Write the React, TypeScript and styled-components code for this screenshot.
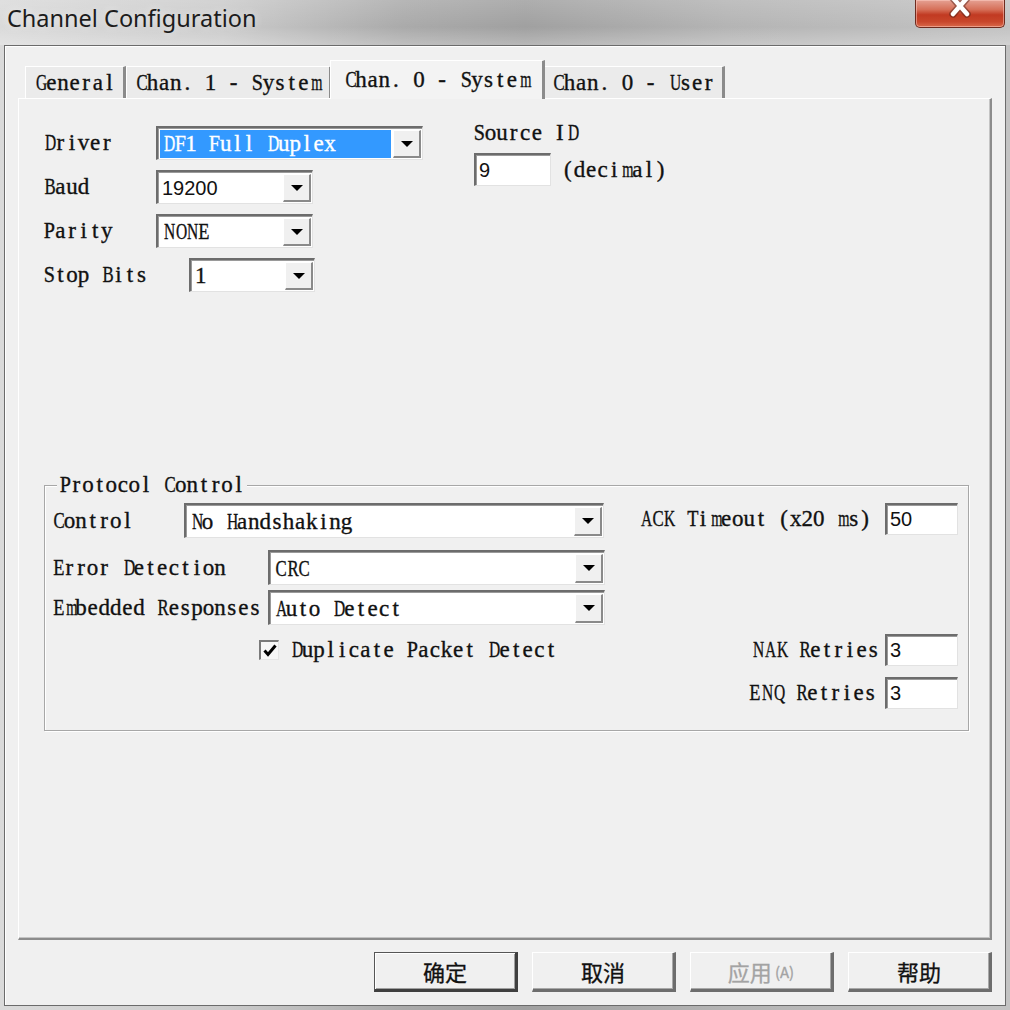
import * as React from "react"
import styled, { createGlobalStyle } from "styled-components"

const GlobalStyle = createGlobalStyle`
  html, body {
    margin: 0;
    padding: 0;
    background: #c9c9c9;
  }
`

// the dialog uses an old bitmap font: serif glyphs in fixed cells
const SERIF = `"Liberation Serif", "Noto Sans CJK SC", serif`
const SANS = `"Liberation Sans", Arial, sans-serif`
const CJK = `"Noto Sans CJK SC", "Noto Sans", sans-serif`

const CELL = 11.6
const FONT_PX = 23

// advance widths of Liberation Serif (em) for the wider glyphs
const WIDE: Record<string, number> = {
  A: 0.722, B: 0.667, C: 0.667, D: 0.722, E: 0.611, F: 0.556, G: 0.722, H: 0.722,
  K: 0.722, L: 0.611, M: 0.889, N: 0.722, O: 0.722, P: 0.556, Q: 0.722, R: 0.667,
  S: 0.556, T: 0.611, U: 0.722, V: 0.722, W: 0.944, X: 0.722, Y: 0.722, Z: 0.611,
  m: 0.778, w: 0.722,
}

const squeezeOf = (c: string) => {
  const w = WIDE[c]
  if (!w) return 1
  return Math.min(1, (CELL - 0.4) / (w * FONT_PX))
}

const Window = styled.div`
  width: 1010px;
  height: 1010px;
  display: flex;
  flex-direction: column;
  background: linear-gradient(90deg, #dadada 0%, #cbcbcb 22%, #aaaaaa 40%, #a0a0a0 52%, #b4b4b4 72%, #c3c3c3 100%);
  overflow: hidden;
`

const TitleBar = styled.div`
  height: 45px;
  flex: none;
  display: flex;
  justify-content: space-between;
  align-items: flex-start;
  background: linear-gradient(180deg, rgba(255,255,255,0.15) 0%, rgba(255,255,255,0) 60%, rgba(255,255,255,0.25) 100%);
`

const TitleText = styled.div`
  font-family: "Noto Sans", "Open Sans", sans-serif;
  font-size: 23.5px;
  color: #1c1c1c;
  padding: 1px 0 0 7px;
  line-height: 34px;
  text-shadow: 0 0 8px rgba(255,255,255,0.7);
`

const CloseButton = styled.div`
  width: 90px;
  height: 28px;
  margin: 0 5px 0 0;
  box-sizing: border-box;
  border: 1px solid #6e2b1f;
  border-top: none;
  border-radius: 0 0 5px 5px;
  background: linear-gradient(180deg, #e5a193 0%, #d67059 35%, #c13a22 55%, #c8462b 80%, #d9694a 100%);
  box-shadow: inset 0 0 0 1px rgba(255,210,200,0.5);
  display: flex;
  justify-content: center;
  align-items: flex-start;
`

const Client = styled.div`
  flex: 1;
  margin: 0 4px 4px 4px;
  border: 1px solid #6b6b6b;
  box-shadow: inset 1px 1px 0 #ffffff;
  background: #f0f0f0;
  display: flex;
  flex-direction: column;
  padding: 14px 13px 13px 13px;
  min-height: 0;
`

const TabStrip = styled.div`
  height: 38px;
  flex: none;
  display: flex;
  align-items: flex-end;
  padding-left: 7px;
  position: relative;
  z-index: 1;
`

const Tab = styled.div<{ $active?: boolean }>`
  height: ${p => (p.$active ? 39 : 32)}px;
  box-sizing: border-box;
  padding: 0 ${p => (p.$active ? 13 : 8)}px;
  margin: 0 ${p => (p.$active ? -2 : 0)}px ${p => (p.$active ? -1 : 0)}px;
  background: ${p => (p.$active ? "#f3f3f3" : "#ebebeb")};
  border-top: 1px solid #ffffff;
  border-left: 1px solid #ffffff;
  border-right: 3px solid #8b8b8b;
  display: flex;
  align-items: center;
  font-family: ${SERIF};
  font-size: ${FONT_PX}px;
  -webkit-text-stroke: 0.35px #111;
  color: #111;
  white-space: pre;
  position: relative;
  z-index: ${p => (p.$active ? 2 : 1)};
`

const Cell = styled.span<{ $squeeze: number }>`
  display: inline-block;
  width: ${CELL}px;
  text-align: center;
  transform: scaleX(${p => p.$squeeze});
`

const Mono: React.FC<{ text: string }> = ({ text }) => (
  <>
    {[...text].map((c, i) => (
      <Cell key={i} $squeeze={squeezeOf(c)}>
        {c === " " ? "\u00a0" : c}
      </Cell>
    ))}
  </>
)

const Panel = styled.div`
  flex: 1;
  box-sizing: border-box;
  border-top: 1px solid #ffffff;
  border-left: 1px solid #ffffff;
  border-right: 2px solid #8c8c8c;
  border-bottom: 2px solid #8c8c8c;
  box-shadow: inset -1px -1px 0 #c4c4c4;
  background: #f0f0f0;
  padding: 22px 0 0 24px;
  display: flex;
  flex-direction: column;
`

const TopSection = styled.div`
  display: flex;
  align-items: flex-start;
  gap: 50px;
`

const FieldColumn = styled.div`
  display: flex;
  flex-direction: column;
  gap: 10px;
  margin-top: 5px;
`

const FieldRow = styled.div<{ $gap?: number }>`
  display: flex;
  align-items: center;
  margin-top: ${p => p.$gap ?? 0}px;
`

const Label = styled.span<{ $w?: number }>`
  font-family: ${SERIF};
  font-size: ${FONT_PX}px;
  line-height: 24px;
  color: #111;
  -webkit-text-stroke: 0.35px #111;
  white-space: pre;
  width: ${p => (p.$w ? `${p.$w}px` : "auto")};
  flex: none;
`

const Combo = styled.div<{ $w: number; $h?: number }>`
  width: ${p => p.$w}px;
  height: ${p => p.$h ?? 34}px;
  flex: none;
  box-sizing: border-box;
  display: flex;
  background: #ffffff;
  border-style: solid;
  border-width: 2px 1px 1px 2px;
  border-color: #6c6c6c #e2e2e2 #e2e2e2 #6c6c6c;
  box-shadow: inset 1px 1px 0 #9a9a9a;
  padding: 2px 1px 1px 2px;
`

const ComboText = styled.div<{ $selected?: boolean; $sans?: boolean }>`
  flex: 1;
  display: flex;
  align-items: center;
  padding-left: 2px;
  margin-right: 2px;
  background: ${p => (p.$selected ? "#3399ff" : "transparent")};
  color: ${p => (p.$selected ? "#ffffff" : "#111")};
  font-family: ${p => (p.$sans ? SANS : SERIF)};
  font-size: ${p => (p.$sans ? 20 : FONT_PX)}px;
  -webkit-text-stroke: ${p => (p.$sans ? "0" : `0.35px ${p.$selected ? "#ffffff" : "#111"}`)};
  white-space: pre;
`

const DropButton = styled.div`
  width: 28px;
  flex: none;
  box-sizing: border-box;
  background: #f0f0f0;
  border-top: 1px solid #ffffff;
  border-left: 1px solid #ffffff;
  border-right: 2px solid #8a8a8a;
  border-bottom: 2px solid #8a8a8a;
  display: flex;
  align-items: center;
  justify-content: center;
`

const SourceBlock = styled.div`
  display: flex;
  flex-direction: column;
`

const SourceLine = styled.div`
  display: flex;
  align-items: center;
  gap: 11px;
  margin-top: 8px;
  margin-left: 1px;
`

const NumberInput = styled.div<{ $w: number; $h?: number }>`
  width: ${p => p.$w}px;
  height: ${p => p.$h ?? 33}px;
  flex: none;
  box-sizing: border-box;
  background: #ffffff;
  border-style: solid;
  border-width: 2px 1px 1px 2px;
  border-color: #6c6c6c #e2e2e2 #e2e2e2 #6c6c6c;
  box-shadow: inset 1px 1px 0 #9a9a9a;
  padding-left: 3px;
  display: flex;
  align-items: center;
  font-family: ${SANS};
  font-size: 20px;
  color: #111;
`

const GroupBox = styled.div`
  position: relative;
  width: 925px;
  margin: 193px 0 0 1px;
  box-sizing: border-box;
  border: 1px solid #a7a7a7;
  box-shadow: inset 1px 1px 0 #ffffff, 1px 1px 0 #ffffff;
  padding: 17px 10px 21px 7px;
  display: flex;
  justify-content: space-between;
`

const GroupTitle = styled.span`
  position: absolute;
  top: -12px;
  left: 12px;
  padding: 0 2px;
  background: #f0f0f0;
  font-family: ${SERIF};
  font-size: ${FONT_PX}px;
  -webkit-text-stroke: 0.35px #111;
  line-height: 22px;
  color: #111;
  white-space: pre;
`

const GroupLeft = styled.div`
  display: flex;
  flex-direction: column;
`

const GroupRight = styled.div`
  display: flex;
  flex-direction: column;
  align-items: flex-end;
`

const CheckRow = styled.div`
  display: flex;
  align-items: center;
  gap: 11px;
  margin: 13px 0 0 207px;
`

const CheckBox = styled.div`
  width: 20px;
  height: 20px;
  box-sizing: border-box;
  border-style: solid;
  border-width: 2px 1px 1px 2px;
  border-color: #7a7a7a #e6e6e6 #e6e6e6 #7a7a7a;
  background: #f7f7f7;
  display: flex;
  align-items: center;
  justify-content: center;
`

const RightRow = styled.div<{ $top?: number; $gap?: number }>`
  display: flex;
  align-items: center;
  gap: ${p => p.$gap ?? 6}px;
  margin-top: ${p => p.$top ?? 0}px;
`

const ButtonRow = styled.div`
  flex: none;
  display: flex;
  justify-content: flex-end;
  gap: 14px;
  margin-top: 12px;
`

const DialogButton = styled.div<{ $primary?: boolean; $disabled?: boolean }>`
  width: 144px;
  height: 40px;
  box-sizing: border-box;
  background: #f0f0f0;
  border-top: 1px solid ${p => (p.$primary ? "#555" : "#ffffff")};
  border-left: 1px solid ${p => (p.$primary ? "#555" : "#ffffff")};
  border-right: 3px solid ${p => (p.$primary ? "#3f3f3f" : "#6d6d6d")};
  border-bottom: 3px solid ${p => (p.$primary ? "#3f3f3f" : "#6d6d6d")};
  box-shadow: ${p => (p.$primary ? "inset 1px 1px 0 #ffffff, inset -1px -1px 0 #a0a0a0" : "inset -1px -1px 0 #a8a8a8")};
  display: flex;
  align-items: center;
  justify-content: center;
  font-family: ${CJK};
  font-size: 22px;
  -webkit-text-stroke: 0.3px ${p => (p.$disabled ? "#a3a3a3" : "#111")};
  color: ${p => (p.$disabled ? "#a3a3a3" : "#111")};
`

const Mnemonic = styled.span`
  font-size: 15px;
  margin-left: 3px;
`

const Arrow = () => (
  <svg width="14" height="8" viewBox="0 0 14 8">
    <polygon points="1,1 13,1 7,7" fill="#000" />
  </svg>
)

const Select: React.FC<{ w: number; h?: number; value: string; selected?: boolean; sans?: boolean }> = ({ w, h, value, selected, sans }) => (
  <Combo $w={w} $h={h}>
    <ComboText $selected={selected} $sans={sans}>
      {sans ? value : <Mono text={value} />}
    </ComboText>
    <DropButton>
      <Arrow />
    </DropButton>
  </Combo>
)

const App: React.FC = () => {
  return (
    <>
      <GlobalStyle />
      <Window>
        <TitleBar>
          <TitleText>Channel Configuration</TitleText>
          <CloseButton>
            <svg width="30" height="20" viewBox="0 0 30 20">
              <path d="M8 -2 L22 14 M22 -2 L8 14" stroke="#5a2218" strokeWidth="7.5" strokeLinecap="round" fill="none" opacity="0.5" />
              <path d="M8 -2 L22 14 M22 -2 L8 14" stroke="#ffffff" strokeWidth="4.5" strokeLinecap="round" fill="none" />
            </svg>
          </CloseButton>
        </TitleBar>
        <Client>
          <TabStrip>
            <Tab><Mono text="General" /></Tab>
            <Tab><Mono text="Chan. 1 - System" /></Tab>
            <Tab $active><Mono text="Chan. 0 - System" /></Tab>
            <Tab><Mono text="Chan. 0 - User" /></Tab>
          </TabStrip>
          <Panel>
            <TopSection>
              <FieldColumn>
                <FieldRow>
                  <Label $w={113}><Mono text="Driver" /></Label>
                  <Select w={267} value="DF1 Full Duplex" selected />
                </FieldRow>
                <FieldRow>
                  <Label $w={113}><Mono text="Baud" /></Label>
                  <Select w={157} value="19200" sans />
                </FieldRow>
                <FieldRow>
                  <Label $w={113}><Mono text="Parity" /></Label>
                  <Select w={157} value="NONE" />
                </FieldRow>
                <FieldRow>
                  <Label $w={146}><Mono text="Stop Bits" /></Label>
                  <Select w={126} value="1" />
                </FieldRow>
              </FieldColumn>
              <SourceBlock>
                <Label><Mono text="Source ID" /></Label>
                <SourceLine>
                  <NumberInput $w={77}>9</NumberInput>
                  <Label><Mono text="(decimal)" /></Label>
                </SourceLine>
              </SourceBlock>
            </TopSection>

            <GroupBox>
              <GroupTitle><Mono text="Protocol Control" /></GroupTitle>
              <GroupLeft>
                <FieldRow>
                  <Label $w={132}><Mono text="Control" /></Label>
                  <Select w={420} h={35} value="No Handshaking" />
                </FieldRow>
                <FieldRow $gap={12}>
                  <Label $w={216}><Mono text="Error Detection" /></Label>
                  <Select w={337} h={35} value="CRC" />
                </FieldRow>
                <FieldRow $gap={5}>
                  <Label $w={216}><Mono text="Embedded Responses" /></Label>
                  <Select w={337} h={35} value="Auto Detect" />
                </FieldRow>
                <CheckRow>
                  <CheckBox>
                    <svg width="14" height="13" viewBox="0 0 14 13">
                      <polyline points="1.5,6.5 5,10.5 12.5,1.5" stroke="#000" strokeWidth="3" fill="none" />
                    </svg>
                  </CheckBox>
                  <Label><Mono text="Duplicate Packet Detect" /></Label>
                </CheckRow>
              </GroupLeft>
              <GroupRight>
                <RightRow $gap={14}>
                  <Label><Mono text="ACK Timeout (x20 ms)" /></Label>
                  <NumberInput $w={73} $h={32}>50</NumberInput>
                </RightRow>
                <RightRow $top={99}>
                  <Label><Mono text="NAK Retries" /></Label>
                  <NumberInput $w={73} $h={32}>3</NumberInput>
                </RightRow>
                <RightRow $top={11} $gap={9}>
                  <Label><Mono text="ENQ Retries" /></Label>
                  <NumberInput $w={73} $h={32}>3</NumberInput>
                </RightRow>
              </GroupRight>
            </GroupBox>
          </Panel>
          <ButtonRow>
            <DialogButton $primary>确定</DialogButton>
            <DialogButton>取消</DialogButton>
            <DialogButton $disabled>
              应用<Mnemonic>(A)</Mnemonic>
            </DialogButton>
            <DialogButton>帮助</DialogButton>
          </ButtonRow>
        </Client>
      </Window>
    </>
  )
}

export default App
